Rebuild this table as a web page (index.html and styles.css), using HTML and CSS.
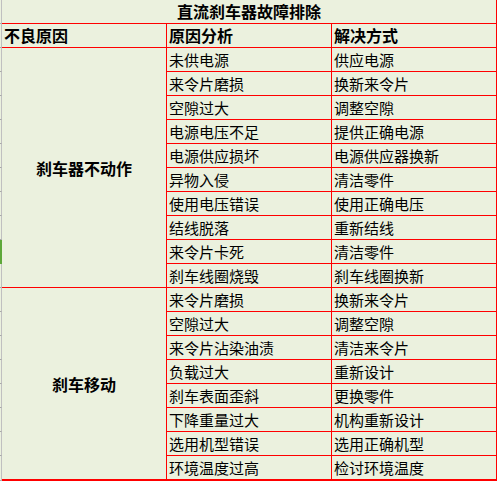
FILE: index.html
```html
<!DOCTYPE html>
<html lang="zh-CN">
<head>
<meta charset="utf-8">
<title>直流刹车器故障排除</title>
<link rel="stylesheet" href="styles.css">
</head>
<body>
<div class="sheet">
  <div class="g"></div>
  <div class="title">直流刹车器故障排除</div>

  <div class="g"></div>
  <div class="cell c1 head">不良原因</div>
  <div class="cell c2 head">原因分析</div>
  <div class="cell c3 head">解决方式</div>

  <div class="g"></div>
  <div class="cell c1 merged span10">刹车器不动作</div>
  <div class="cell c2">未供电源</div>
  <div class="cell c3">供应电源</div>
  <div class="g"></div>
  <div class="cell c2">来令片磨损</div>
  <div class="cell c3">换新来令片</div>
  <div class="g"></div>
  <div class="cell c2">空隙过大</div>
  <div class="cell c3">调整空隙</div>
  <div class="g"></div>
  <div class="cell c2">电源电压不足</div>
  <div class="cell c3">提供正确电源</div>
  <div class="g"></div>
  <div class="cell c2">电源供应损坏</div>
  <div class="cell c3">电源供应器换新</div>
  <div class="g"></div>
  <div class="cell c2">异物入侵</div>
  <div class="cell c3">清洁零件</div>
  <div class="g"></div>
  <div class="cell c2">使用电压错误</div>
  <div class="cell c3">使用正确电压</div>
  <div class="g"></div>
  <div class="cell c2">结线脱落</div>
  <div class="cell c3">重新结线</div>
  <div class="g sel"></div>
  <div class="cell c2">来令片卡死</div>
  <div class="cell c3">清洁零件</div>
  <div class="g"></div>
  <div class="cell c2">刹车线圈烧毁</div>
  <div class="cell c3">刹车线圈换新</div>

  <div class="g"></div>
  <div class="cell c1 merged span8 last">刹车移动</div>
  <div class="cell c2">来令片磨损</div>
  <div class="cell c3">换新来令片</div>
  <div class="g"></div>
  <div class="cell c2">空隙过大</div>
  <div class="cell c3">调整空隙</div>
  <div class="g"></div>
  <div class="cell c2">来令片沾染油渍</div>
  <div class="cell c3">清洁来令片</div>
  <div class="g"></div>
  <div class="cell c2">负载过大</div>
  <div class="cell c3">重新设计</div>
  <div class="g"></div>
  <div class="cell c2">刹车表面歪斜</div>
  <div class="cell c3">更换零件</div>
  <div class="g"></div>
  <div class="cell c2">下降重量过大</div>
  <div class="cell c3">机构重新设计</div>
  <div class="g"></div>
  <div class="cell c2">选用机型错误</div>
  <div class="cell c3">选用正确机型</div>
  <div class="g"></div>
  <div class="cell c2 last">环境温度过高</div>
  <div class="cell c3 last">检讨环境温度</div>
</div>
</body>
</html>
```

FILE: styles.css
```css
html, body {
  margin: 0;
  padding: 0;
  background: #ebf1de;
}

body {
  width: 497px;
  height: 481px;
  overflow: hidden;
  font-family: "Noto Sans CJK SC", "Noto Sans", sans-serif;
  font-size: 15px;
  color: #000;
}

.sheet {
  display: grid;
  grid-template-columns: 2px 165px 165px 165px;
  grid-template-rows: repeat(19, 24px) 25px;
  width: 497px;
}

.g {
  grid-column: 1;
  box-sizing: border-box;
  border-right: 1px solid #c0c0c0;
  border-bottom: 1px solid #a8a8a8;
}

.g.sel {
  background: #5ea83a;
  border-right-color: #5ea83a;
  border-bottom-color: #5ea83a;
}

.title {
  grid-column: 2 / span 3;
  box-sizing: border-box;
  border-right: 1px solid #ff0000;
  border-bottom: 1px solid #ff0000;
  text-align: center;
  font-weight: bold;
  font-size: 16px;
  line-height: 23px;
  white-space: nowrap;
}

.cell {
  box-sizing: border-box;
  border-right: 1px solid #ff0000;
  border-bottom: 1px solid #ff0000;
  padding: 0 2px;
  line-height: 23px;
  white-space: nowrap;
  overflow: hidden;
}

.c1 { grid-column: 2; }
.c2 { grid-column: 3; }
.c3 { grid-column: 4; }

.head {
  font-weight: bold;
  font-size: 16px;
}

.merged {
  display: flex;
  align-items: center;
  justify-content: center;
  font-weight: bold;
  font-size: 16px;
  padding-top: 2px;
}

.span10 { grid-row: span 10; }
.span8 { grid-row: span 8; }

.last {
  border-bottom-width: 2px;
}
```
